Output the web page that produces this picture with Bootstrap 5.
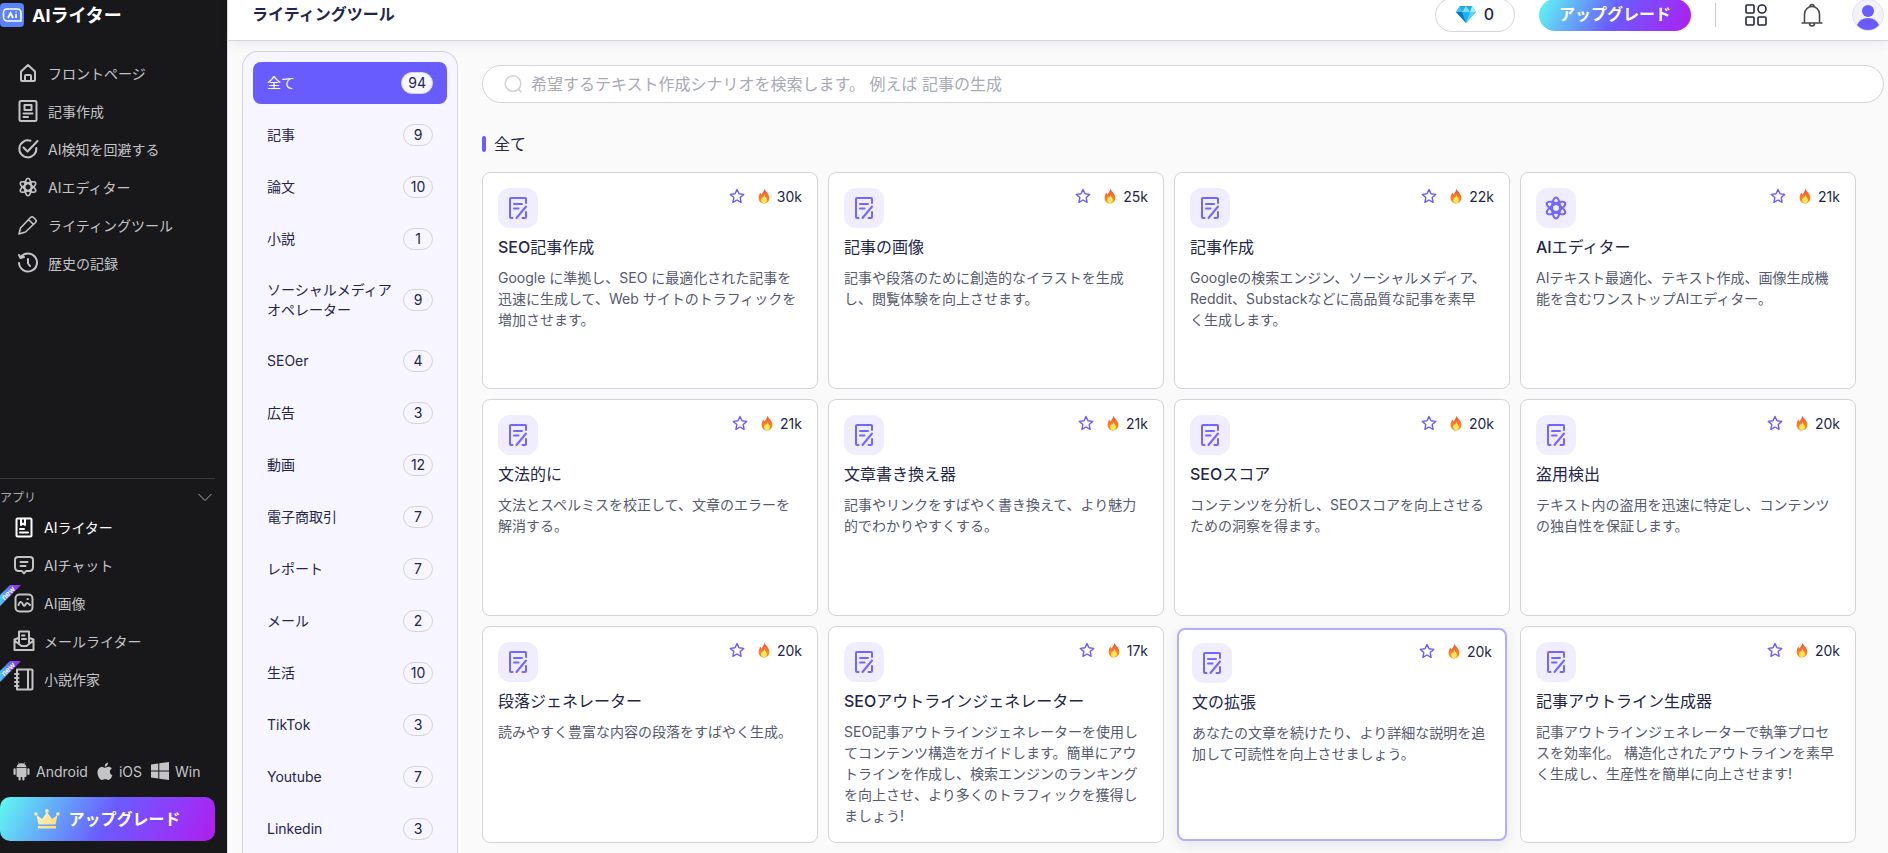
<!DOCTYPE html>
<html lang="ja">
<head>
<meta charset="utf-8">
<meta name="viewport" content="width=device-width, initial-scale=1">
<title>ライティングツール</title>
<link href="https://cdn.jsdelivr.net/npm/bootstrap@5.3.0/dist/css/bootstrap.min.css" rel="stylesheet">
<style>
:root{--violet:#685cff;--ink:#23264a;--line:#d4d4da;--grad:linear-gradient(118deg,#5ffbf1 0%,#6a5cff 50%,#b01ef0 100%)}
body{font-family:Inter,"Noto Sans CJK JP",sans-serif;font-size:14px;line-height:21px;color:var(--ink);background:#fafafa;height:100vh;overflow:hidden}
svg{display:block;flex:none}
.line-icon{fill:none;stroke:currentColor;stroke-width:2;stroke-linecap:round;stroke-linejoin:round}
.line-icon.thin{stroke-width:1.6}
a{color:inherit;text-decoration:none}
.side{flex:0 0 228px;background:#18181a;color:#c4c4c6;border-right:1px solid #dcdce0;height:100vh;padding:0 12px 12px 0}
.brand-row{height:30px;gap:8px;font-size:18px;font-weight:700;color:#fff;margin-bottom:24px}
.side-link{height:38px;position:relative}
.side-link .ico{width:24px;display:flex;justify-content:center}
.menu-main{padding-left:16px}
.menu-main .side-link{gap:8px}
.menu-apps .side-link{padding-left:12px;gap:8px}
.menu-apps .current{color:#fff}
.menu-apps{border-top:1px solid #3a3a3d;margin-bottom:61px}
.apps-head{height:29px;padding:8px 3px 0 0;font-size:12px;color:#a9a9ab;border:0;background:none}
.ribbon{position:absolute;left:0;top:1px}
.platforms{height:24px;padding-left:13px;gap:9px;margin-bottom:14px}
.platforms a{display:flex;align-items:center;gap:6px}
.upgrade{border:0;color:#fff;font-weight:700;font-size:16px;background:var(--grad)}
.upgrade-side{height:44px;border-radius:10px}
.upgrade-top{width:152px;height:32px;border-radius:16px;margin:0 24px}
.content{min-width:0}
.body-row{min-height:0}
.topbar{height:52px;margin-top:-11px;background:#fff;border-bottom:1px solid var(--line);box-shadow:0 4px 10px rgba(60,50,140,.07);padding:0 4px 0 24px}
.topbar h1{font-size:16px;font-weight:600;margin:0}
.credits{width:80px;height:34px;border:1px solid var(--line);border-radius:17px;background:#fff;font-size:16px;font-weight:500;color:var(--ink)}
.sep{width:1px;height:24px;background:#ccc;margin-right:28px}
.tool-btn{border:0;background:none;padding:0;color:var(--ink)}
.bell{margin:0 28px 0 32px;color:#4a4a4e}
.cats{flex:0 0 216px;margin:10px 24px 0 14px;padding:10px;background:#f7f5ff;border:1px solid var(--line);border-bottom:0;border-radius:16px 16px 0 0;gap:10px}
.cat{padding:10px 14px;border-radius:8px;line-height:20px;color:var(--ink)}
.cat .num{min-width:30px;height:22px;padding:0 6px;border:1px solid var(--line);border-radius:11px;text-align:center;flex:none;background:#f7f5ff;color:var(--ink)}
.cat.current{background:var(--violet);color:#fff}
.search{height:38px;border:1px solid var(--line);border-radius:19px;background:#fff;padding:0 20px;gap:8px;margin:24px 4px 0 0;color:#d0d0d6}
.search input{border:0;outline:0;background:none;font-size:16px;color:var(--ink)}
.search input::placeholder{color:#a8aab4}
.group-title{font-size:16px;line-height:24px;font-weight:400;margin:29px 0 16px;gap:8px}
.group-title::before{content:"";width:4px;height:16px;border-radius:2px;background:var(--violet)}
.tools{display:grid;grid-template-columns:repeat(4,minmax(0,1fr));gap:10px;margin-right:32px}
.tool{min-height:217px;background:#fff;border:1px solid var(--line);border-radius:8px;padding:15px}
.tool.hovered{margin:2px 3px;min-height:213px;border:2px solid #b4adff;padding:13px;box-shadow:0 4px 12px rgba(60,50,140,.1)}
.tile{width:40px;height:40px;border-radius:12px;background:#f0edff;color:#7266ff}
.tool h2{font-size:16px;line-height:24px;font-weight:400;margin:7px 0 8px;color:var(--ink)}
.latin{font-weight:500}
.tool p{margin:0;color:#555a70;line-height:21px}
.meta{height:16px;gap:5px;color:var(--ink)}
.fav{border:0;background:none;padding:0;color:var(--violet);margin-right:6px}
</style>
</head>
<body class="d-flex">
<svg width="0" height="0" class="position-absolute" aria-hidden="true">
  <defs>
    <linearGradient id="flame" x1="0" y1="0" x2="0" y2="1"><stop offset="0" stop-color="#f4503a"/><stop offset="1" stop-color="#ff9b1a"/></linearGradient>
    <linearGradient id="ribbonFill"><stop offset="0" stop-color="#4cc9f5"/><stop offset=".5" stop-color="#6a5cff"/><stop offset="1" stop-color="#b01ef0"/></linearGradient>
    <linearGradient id="gold" x1="0" y1="0" x2="1" y2="1"><stop offset="0" stop-color="#fff6cf"/><stop offset="1" stop-color="#ffd873"/></linearGradient>
  </defs>
  <symbol id="doc" viewBox="0 0 24 24"><path d="M6.500 22H5a1 1 0 0 1-1-1V3a1 1 0 0 1 1-1h14a1 1 0 0 1 1 1v4M20 16v5a1 1 0 0 1-1 1h-2.500M10.500 22 20 10.500M8 8h8M8 12.500h4.500"/></symbol>
  <symbol id="atom" viewBox="0 0 24 24"><ellipse cx="12" cy="12" rx="4" ry="10.500"/><ellipse cx="12" cy="12" rx="4" ry="10.500" transform="rotate(60 12 12)"/><ellipse cx="12" cy="12" rx="4" ry="10.500" transform="rotate(120 12 12)"/><circle cx="12" cy="12" r="4.500"/></symbol>
  <symbol id="star" viewBox="0 0 16 16"><path d="m8 1.500 2 4.300 4.700.6-3.500 3.200.9 4.700L8 12l-4.100 2.300.9-4.700L1.300 6.400 6 5.800z" fill="none" stroke="currentColor" stroke-width="1.400" stroke-linejoin="round"/></symbol>
  <symbol id="fire" viewBox="0 0 16 16"><path d="M8.500.5c.3 2.500 4.900 5 4.900 9.300A5.300 5.300 0 0 1 8 15.500a5.300 5.300 0 0 1-5.400-5.600c0-2 1-3.500 1.500-5.400.6.500 1 1.300 1.200 2C6.300 5.300 8.300 3 8.500.5z" fill="url(#flame)"/><path d="M8.200 6.500c.3 2 2.700 3.200 2.700 5.600a2.900 2.900 0 0 1-5.800 0c0-1.300.8-2 1-3 .5.200.7.600.8 1 .7-.9 1.200-2.200 1.300-3.600z" fill="#ffe75a"/></symbol>
</svg>

<aside class="side d-flex flex-column">
  <a href="#" class="brand-row d-flex align-items-center">
    <svg width="24" height="24" viewBox="0 0 24 24"><rect width="24" height="24" rx="4" fill="#5b82f7"/><path d="M7 6h10q4 0 4 4v8H8q-4.500 0-4.500-4v-4q0-4 3.500-4z" fill="none" stroke="#fff" stroke-width="1.600"/><path d="m8 15 2.500-5 2.500 5" fill="none" stroke="#fff" stroke-width="1.800"/><path d="M16 11v4" stroke="#fff" stroke-width="1.800"/><circle cx="16" cy="9" r="1" fill="#62e8c0"/></svg>
    <span>AIライター</span>
  </a>
  <nav class="menu-main d-flex flex-column">
    <a href="#" class="side-link d-flex align-items-center"><span class="ico"><svg class="line-icon" width="18" height="20" viewBox="0 0 18 20"><path d="M2 8.500 9 2l7 6.500V17a1 1 0 0 1-1 1H3a1 1 0 0 1-1-1zM6 18v-5a1 1 0 0 1 1-1h4a1 1 0 0 1 1 1v5"/></svg></span>フロントページ</a>
    <a href="#" class="side-link d-flex align-items-center"><span class="ico"><svg class="line-icon" width="20" height="24" viewBox="0 0 20 24"><rect x="1.500" y="2" width="17" height="20" rx="1.500"/><path d="M6.500 6h7v5h-7zM5.500 14.500h9M5.500 18H10"/></svg></span>記事作成</a>
    <a href="#" class="side-link d-flex align-items-center"><span class="ico"><svg class="line-icon" width="22" height="22" viewBox="0 0 22 22"><path d="M13.500 2.800A8.500 8.500 0 1 0 19.300 10M6.500 9.500l4 4L20.500 3"/></svg></span>AI検知を回避する</a>
    <a href="#" class="side-link d-flex align-items-center"><span class="ico"><svg class="line-icon" width="20" height="20"><use href="#atom"/></svg></span>AIエディター</a>
    <a href="#" class="side-link d-flex align-items-center"><span class="ico"><svg class="line-icon thin" width="22" height="22" viewBox="0 0 22 22"><path d="m2 20 1.500-6L13.500 3.500Q15 2 16.500 3.500l2 2Q20 7 18.500 8.500L8.500 18zM11.500 5.500l5 5"/></svg></span>ライティングツール</a>
    <a href="#" class="side-link d-flex align-items-center"><span class="ico"><svg class="line-icon" width="22" height="22" viewBox="0 0 22 22"><path d="M3.500 5.500A9 9 0 1 1 2 11M2 3l1.500 3L7 5M11 7v4.500l2 2.500"/></svg></span>歴史の記録</a>
  </nav>

  <nav class="menu-apps d-flex flex-column mt-auto">
    <button type="button" class="apps-head d-flex align-items-center justify-content-between"><span>アプリ</span><svg width="14" height="9" viewBox="0 0 14 9" fill="none" stroke="currentColor"><path d="m.5 1 6.500 6.500L13.500 1"/></svg></button>
    <a href="#" class="side-link current d-flex align-items-center"><span class="ico"><svg class="line-icon" width="18" height="21" viewBox="0 0 18 21"><rect x="1.500" y="1.500" width="15" height="18" rx="1"/><path d="M6 2v6l2-1.500L10 8V2M5 12h4M5 15.500h8"/></svg></span>AIライター</a>
    <a href="#" class="side-link d-flex align-items-center"><span class="ico"><svg class="line-icon" width="20" height="20" viewBox="0 0 20 20"><path d="M4 2h12q3 0 3 3v7q0 4-4 4h-3l-2 2.500L8 16H5q-4 0-4-4V5q0-3 3-3zM6.500 7h7M6.500 11h5"/></svg></span>AIチャット</a>
    <a href="#" class="side-link d-flex align-items-center"><svg class="ribbon" width="21" height="21" viewBox="0 0 21 21"><path d="M10 0h11L0 21V10z" fill="url(#ribbonFill)"/><text x="0" y="3" transform="translate(8 8) rotate(-45)" text-anchor="middle" font-size="8" font-weight="600" fill="#fff">new</text></svg><span class="ico"><svg class="line-icon" width="20" height="20" viewBox="0 0 20 20"><rect x="1.500" y="1.500" width="17" height="17" rx="4"/><path d="M4.500 12q1.500-5 4-1.500 1.500 4 3 1 1.500-3 4.500.5M13.500 6h.4"/></svg></span>AI画像</a>
    <a href="#" class="side-link d-flex align-items-center"><span class="ico"><svg class="line-icon" width="22" height="22" viewBox="0 0 22 22"><path d="M5.500 8 1.500 9.500V20h19V9.500l-4-1.500M1.500 10.500l7 5.500h5l7-5.500M6 13V1.500h10V13M9 5.500h2.500M9 9h4"/></svg></span>メールライター</a>
    <a href="#" class="side-link d-flex align-items-center"><svg class="ribbon" width="21" height="21" viewBox="0 0 21 21"><path d="M10 0h11L0 21V10z" fill="url(#ribbonFill)"/><text x="0" y="3" transform="translate(8 8) rotate(-45)" text-anchor="middle" font-size="8" font-weight="600" fill="#fff">new</text></svg><span class="ico"><svg class="line-icon" width="20" height="23" viewBox="0 0 20 23"><path d="M3 1.500h14.500a1 1 0 0 1 1 1v18a1 1 0 0 1-1 1H3zM14 1.500v20M1 6h3.500M1 10h3.500M1 14h3.500M1 18h3.500"/></svg></span>小説作家</a>
  </nav>

  <div class="platforms d-flex align-items-center">
    <a href="#"><svg width="17" height="19" viewBox="0 0 17 19" fill="currentColor"><path d="M3.500 6h10v8a1 1 0 0 1-1 1h-1v2.500a1.100 1.100 0 0 1-2.200 0V15H7.700v2.500a1.100 1.100 0 0 1-2.200 0V15h-1a1 1 0 0 1-1-1zM.5 7.300a1.100 1.100 0 0 1 2.200 0V12a1.100 1.100 0 0 1-2.200 0zM14.300 7.300a1.100 1.100 0 0 1 2.200 0V12a1.100 1.100 0 0 1-2.200 0zM3.500 5.300q.2-2.500 2.300-3.500L5 .5l.5-.3.9 1.300q2.100-.7 4.200 0l.9-1.300.5.3-.8 1.300q2.100 1 2.300 3.500z"/></svg>Android</a>
    <a href="#"><svg width="16" height="19" viewBox="0 0 16 19" fill="currentColor"><path d="M11 .5q.2 3.500-3.200 4.300Q7.500 1.500 11 .5zM8 5.800c1 0 2-1 3.600-1 1.300 0 2.500.6 3.200 1.700-2.900 1.700-2.400 5.600.6 6.800-.8 2.200-2.300 4.700-4 4.700-1.200 0-1.700-.7-3.200-.7s-2 .7-3.200.7C2.700 18 .5 13.800.5 10.500c0-3.400 2.200-5.500 4.400-5.500 1.400 0 2.300.8 3.100.8z"/></svg>iOS</a>
    <a href="#"><svg width="18" height="18" viewBox="0 0 18 18" fill="currentColor"><path d="m0 2.500 7.300-1V8.500H0zM8.300 1.300 18 0v8.500H8.300zM0 9.500h7.300v7L0 15.500zM8.300 9.500H18V18l-9.700-1.300z"/></svg>Win</a>
  </div>
  <button type="button" class="upgrade upgrade-side d-flex align-items-center justify-content-center gap-2">
    <svg width="26" height="20" viewBox="0 0 26 20" fill="url(#gold)"><path d="m2.500 6 5.500 4 5-7 5 7 5.500-4L21.500 15.500h-17zM4 17h18v2.500H4z"/><circle cx="2" cy="5" r="1.800"/><circle cx="13" cy="2" r="1.900"/><circle cx="24" cy="5" r="1.800"/></svg>
    <span>アップグレード</span>
  </button>
</aside>

<div class="content flex-grow-1 d-flex flex-column">
  <header class="topbar d-flex align-items-center flex-shrink-0">
    <h1 class="me-auto">ライティングツール</h1>
    <button type="button" class="credits d-flex align-items-center justify-content-center gap-2">
      <svg width="20" height="17" viewBox="0 0 20 17"><path d="M4 0h12l4 6-10 11L0 6z" fill="#19b5fa"/><path d="m4 0 2 6H0z" fill="#38c6f4"/><path d="m4 0 6 0-4 6zM16 0l-6 0 4 6z" fill="#25a7ea"/><path d="m10 0 4 6H6z" fill="#7fe0ff"/><path d="m16 0 4 6h-6z" fill="#a8ecff"/><path d="M0 6h6l4 11z" fill="#0878c8"/><path d="M20 6h-6l-4 11z" fill="#5fd0fb"/></svg>
      <span>0</span>
    </button>
    <button type="button" class="upgrade upgrade-top">アップグレード</button>
    <span class="sep"></span>
    <button type="button" class="tool-btn" aria-label="アプリ一覧"><svg class="line-icon thin" width="24" height="24" viewBox="0 0 24 24"><rect x="2" y="2" width="8" height="8" rx="1"/><circle cx="18" cy="6" r="4"/><rect x="2" y="14" width="8" height="8" rx="1"/><rect x="14" y="14" width="8" height="8" rx="1"/></svg></button>
    <button type="button" class="tool-btn bell" aria-label="通知"><svg class="line-icon thin" width="24" height="24" viewBox="0 0 24 24"><path d="M2 20h20M4.500 20v-9a7.500 7.500 0 0 1 15 0v9M10 3.500a2 2 0 0 1 4 0M9.500 20.500a2.500 2.500 0 0 0 5 0"/></svg></button>
    <button type="button" class="tool-btn" aria-label="アカウント"><svg width="32" height="32" viewBox="0 0 32 32"><circle cx="16" cy="16" r="15.500" fill="#f5f2ff" stroke="#e4e1ee"/><circle cx="16" cy="12" r="6" fill="#685cff"/><path d="M5 26q3-7 11-7t11 7q-4 5-11 5T5 26z" fill="#685cff"/></svg></button>
  </header>

  <div class="body-row d-flex flex-grow-1">
    <nav class="cats d-flex flex-column">
      <a href="#" class="cat current d-flex align-items-center justify-content-between"><span>全て</span><span class="num">94</span></a>
      <a href="#" class="cat d-flex align-items-center justify-content-between"><span>記事</span><span class="num">9</span></a>
      <a href="#" class="cat d-flex align-items-center justify-content-between"><span>論文</span><span class="num">10</span></a>
      <a href="#" class="cat d-flex align-items-center justify-content-between"><span>小説</span><span class="num">1</span></a>
      <a href="#" class="cat d-flex align-items-center justify-content-between"><span>ソーシャルメディアオペレーター</span><span class="num">9</span></a>
      <a href="#" class="cat d-flex align-items-center justify-content-between"><span>SEOer</span><span class="num">4</span></a>
      <a href="#" class="cat d-flex align-items-center justify-content-between"><span>広告</span><span class="num">3</span></a>
      <a href="#" class="cat d-flex align-items-center justify-content-between"><span>動画</span><span class="num">12</span></a>
      <a href="#" class="cat d-flex align-items-center justify-content-between"><span>電子商取引</span><span class="num">7</span></a>
      <a href="#" class="cat d-flex align-items-center justify-content-between"><span>レポート</span><span class="num">7</span></a>
      <a href="#" class="cat d-flex align-items-center justify-content-between"><span>メール</span><span class="num">2</span></a>
      <a href="#" class="cat d-flex align-items-center justify-content-between"><span>生活</span><span class="num">10</span></a>
      <a href="#" class="cat d-flex align-items-center justify-content-between"><span>TikTok</span><span class="num">3</span></a>
      <a href="#" class="cat d-flex align-items-center justify-content-between"><span>Youtube</span><span class="num">7</span></a>
      <a href="#" class="cat d-flex align-items-center justify-content-between"><span>Linkedin</span><span class="num">3</span></a>
    </nav>

    <main class="content flex-grow-1">
      <label class="search d-flex align-items-center">
        <svg class="line-icon thin" width="20" height="20" viewBox="0 0 20 20"><circle cx="10" cy="9.500" r="7.800"/><path d="m15.500 15 2.500 3"/></svg>
        <input type="search" class="flex-grow-1 p-0" aria-label="検索" placeholder="希望するテキスト作成シナリオを検索します。 例えば 記事の生成">
      </label>
      <h2 class="group-title d-flex align-items-center">全て</h2>

      <div class="tools">
        <article class="tool">
          <div class="d-flex justify-content-between"><span class="tile d-flex align-items-center justify-content-center"><svg class="line-icon" width="24" height="24"><use href="#doc"/></svg></span><span class="meta d-flex align-items-center"><button type="button" class="fav" aria-label="お気に入り"><svg width="16" height="16"><use href="#star"/></svg></button><svg width="16" height="16"><use href="#fire"/></svg>30k</span></div>
          <h2><span class="latin">SEO</span>記事作成</h2>
          <p>Google に準拠し、SEO に最適化された記事を迅速に生成して、Web サイトのトラフィックを増加させます。</p>
        </article>
        <article class="tool">
          <div class="d-flex justify-content-between"><span class="tile d-flex align-items-center justify-content-center"><svg class="line-icon" width="24" height="24"><use href="#doc"/></svg></span><span class="meta d-flex align-items-center"><button type="button" class="fav" aria-label="お気に入り"><svg width="16" height="16"><use href="#star"/></svg></button><svg width="16" height="16"><use href="#fire"/></svg>25k</span></div>
          <h2>記事の画像</h2>
          <p>記事や段落のために創造的なイラストを生成し、閲覧体験を向上させます。</p>
        </article>
        <article class="tool">
          <div class="d-flex justify-content-between"><span class="tile d-flex align-items-center justify-content-center"><svg class="line-icon" width="24" height="24"><use href="#doc"/></svg></span><span class="meta d-flex align-items-center"><button type="button" class="fav" aria-label="お気に入り"><svg width="16" height="16"><use href="#star"/></svg></button><svg width="16" height="16"><use href="#fire"/></svg>22k</span></div>
          <h2>記事作成</h2>
          <p>Googleの検索エンジン、ソーシャルメディア、Reddit、Substackなどに高品質な記事を素早<br>く生成します。</p>
        </article>
        <article class="tool">
          <div class="d-flex justify-content-between"><span class="tile d-flex align-items-center justify-content-center"><svg class="line-icon" width="24" height="24"><use href="#atom"/></svg></span><span class="meta d-flex align-items-center"><button type="button" class="fav" aria-label="お気に入り"><svg width="16" height="16"><use href="#star"/></svg></button><svg width="16" height="16"><use href="#fire"/></svg>21k</span></div>
          <h2><span class="latin">AI</span>エディター</h2>
          <p>AIテキスト最適化、テキスト作成、画像生成機能を含むワンストップAIエディター。</p>
        </article>
        <article class="tool">
          <div class="d-flex justify-content-between"><span class="tile d-flex align-items-center justify-content-center"><svg class="line-icon" width="24" height="24"><use href="#doc"/></svg></span><span class="meta d-flex align-items-center"><button type="button" class="fav" aria-label="お気に入り"><svg width="16" height="16"><use href="#star"/></svg></button><svg width="16" height="16"><use href="#fire"/></svg>21k</span></div>
          <h2>文法的に</h2>
          <p>文法とスペルミスを校正して、文章のエラーを解消する。</p>
        </article>
        <article class="tool">
          <div class="d-flex justify-content-between"><span class="tile d-flex align-items-center justify-content-center"><svg class="line-icon" width="24" height="24"><use href="#doc"/></svg></span><span class="meta d-flex align-items-center"><button type="button" class="fav" aria-label="お気に入り"><svg width="16" height="16"><use href="#star"/></svg></button><svg width="16" height="16"><use href="#fire"/></svg>21k</span></div>
          <h2>文章書き換え器</h2>
          <p>記事やリンクをすばやく書き換えて、より魅力的でわかりやすくする。</p>
        </article>
        <article class="tool">
          <div class="d-flex justify-content-between"><span class="tile d-flex align-items-center justify-content-center"><svg class="line-icon" width="24" height="24"><use href="#doc"/></svg></span><span class="meta d-flex align-items-center"><button type="button" class="fav" aria-label="お気に入り"><svg width="16" height="16"><use href="#star"/></svg></button><svg width="16" height="16"><use href="#fire"/></svg>20k</span></div>
          <h2><span class="latin">SEO</span>スコア</h2>
          <p>コンテンツを分析し、SEOスコアを向上させるための洞察を得ます。</p>
        </article>
        <article class="tool">
          <div class="d-flex justify-content-between"><span class="tile d-flex align-items-center justify-content-center"><svg class="line-icon" width="24" height="24"><use href="#doc"/></svg></span><span class="meta d-flex align-items-center"><button type="button" class="fav" aria-label="お気に入り"><svg width="16" height="16"><use href="#star"/></svg></button><svg width="16" height="16"><use href="#fire"/></svg>20k</span></div>
          <h2>盗用検出</h2>
          <p>テキスト内の盗用を迅速に特定し、コンテンツの独自性を保証します。</p>
        </article>
        <article class="tool">
          <div class="d-flex justify-content-between"><span class="tile d-flex align-items-center justify-content-center"><svg class="line-icon" width="24" height="24"><use href="#doc"/></svg></span><span class="meta d-flex align-items-center"><button type="button" class="fav" aria-label="お気に入り"><svg width="16" height="16"><use href="#star"/></svg></button><svg width="16" height="16"><use href="#fire"/></svg>20k</span></div>
          <h2>段落ジェネレーター</h2>
          <p>読みやすく豊富な内容の段落をすばやく生成。</p>
        </article>
        <article class="tool">
          <div class="d-flex justify-content-between"><span class="tile d-flex align-items-center justify-content-center"><svg class="line-icon" width="24" height="24"><use href="#doc"/></svg></span><span class="meta d-flex align-items-center"><button type="button" class="fav" aria-label="お気に入り"><svg width="16" height="16"><use href="#star"/></svg></button><svg width="16" height="16"><use href="#fire"/></svg>17k</span></div>
          <h2><span class="latin">SEO</span>アウトラインジェネレーター</h2>
          <p>SEO記事アウトラインジェネレーターを使用してコンテンツ構造をガイドします。簡単にアウトラインを作成し、検索エンジンのランキングを向上させ、より多くのトラフィックを獲得しましょう!</p>
        </article>
        <article class="tool hovered">
          <div class="d-flex justify-content-between"><span class="tile d-flex align-items-center justify-content-center"><svg class="line-icon" width="24" height="24"><use href="#doc"/></svg></span><span class="meta d-flex align-items-center"><button type="button" class="fav" aria-label="お気に入り"><svg width="16" height="16"><use href="#star"/></svg></button><svg width="16" height="16"><use href="#fire"/></svg>20k</span></div>
          <h2>文の拡張</h2>
          <p>あなたの文章を続けたり、より詳細な説明を追加して可読性を向上させましょう。</p>
        </article>
        <article class="tool">
          <div class="d-flex justify-content-between"><span class="tile d-flex align-items-center justify-content-center"><svg class="line-icon" width="24" height="24"><use href="#doc"/></svg></span><span class="meta d-flex align-items-center"><button type="button" class="fav" aria-label="お気に入り"><svg width="16" height="16"><use href="#star"/></svg></button><svg width="16" height="16"><use href="#fire"/></svg>20k</span></div>
          <h2>記事アウトライン生成器</h2>
          <p>記事アウトラインジェネレーターで執筆プロセスを効率化。 構造化されたアウトラインを素早く生成し、生産性を簡単に向上させます!</p>
        </article>
      </div>
    </main>
  </div>
</div>
<script src="https://cdn.jsdelivr.net/npm/bootstrap@5.3.0/dist/js/bootstrap.bundle.min.js"></script>
</body>
</html>
